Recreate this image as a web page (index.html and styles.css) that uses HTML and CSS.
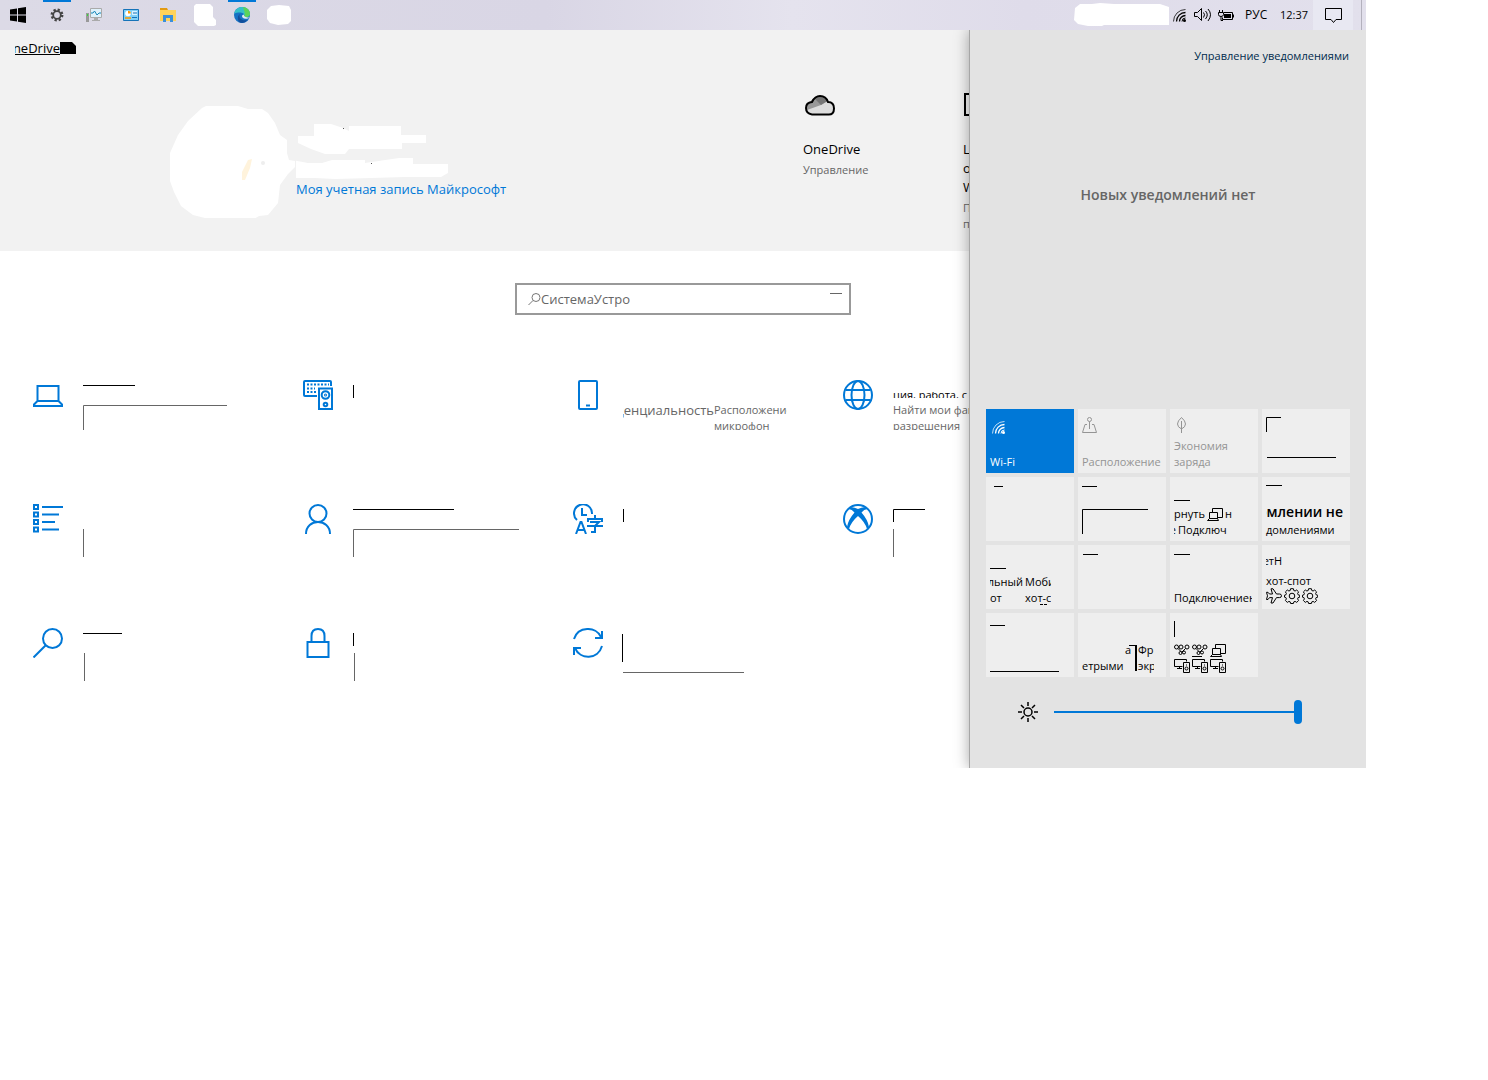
FILE: index.html
```html
<!DOCTYPE html>
<html lang="ru">
<head>
<meta charset="utf-8">
<title>Параметры</title>
<link rel="stylesheet" href="styles.css">
</head>
<body>
<svg class="defs" aria-hidden="true">
  <symbol id="wifi" viewBox="0 0 13 13"><g fill="none" stroke="currentColor"><path d="M.5 12.5A12 12 0 0 1 12.500 .5" opacity=".75"/><path d="M3.500 12.500A9 9 0 0 1 12.500 3.500M6.500 12.500A6 6 0 0 1 12.500 6.500" stroke-width="1.300"/><path d="M9 12.500Q9 9 12.500 9"/></g><circle cx="11.500" cy="11.500" r="1.500" fill="currentColor"/></symbol>
  <symbol id="gear" viewBox="0 0 16 16"><g fill="none" stroke="currentColor"><path d="M6.600 .7h2.800l.4 1.800 1.300.5 1.600-1 1.900 1.900-1 1.600.5 1.300 1.600.4v2l-1.600.4-.5 1.300 1 1.600-1.900 1.900-1.600-1-1.300.5-.4 1.600H6.600l-.4-1.600-1.300-.5-1.600 1-1.900-1.900 1-1.600-.5-1.300-1.400-.4v-2l1.400-.4.5-1.300-1-1.600 1.900-1.900 1.600 1 1.300-.5z"/><circle cx="8" cy="8" r="2.800"/></g></symbol>
  <symbol id="screens" viewBox="0 0 16 13"><path fill="none" stroke="currentColor" d="M5.500 4.500v-4h10v9h-5M2.500 4.500h8v6h-8zM.5 12.500l2-2h8l1 2z"/></symbol>
  <symbol id="project" viewBox="0 0 17 14"><path fill="none" stroke="currentColor" d="M8.500 7.500h-8v-7h12v2M3 9.500h5M5.500 7.500v2M9.500 3.500h6v10h-6zM12 6h1"/><circle cx="12.500" cy="9.500" r="1.500" fill="none" stroke="currentColor"/></symbol>
  <symbol id="snip" viewBox="0 0 16 12"><g fill="none" stroke="currentColor"><circle cx="2.500" cy="2.500" r="2"/><circle cx="7" cy="2.500" r="2"/><circle cx="13" cy="2.500" r="2"/><path d="M4 4l4 4M11.500 4 8 7.500"/><circle cx="6.500" cy="8.500" r="1.500"/><circle cx="10" cy="8" r="1.500"/></g></symbol>
  <symbol id="plane" viewBox="0 0 16 16"><path fill="none" stroke="currentColor" d="M5 .8h2L10.500 6h3q2 0 2 1.800t-2 1.800h-3L7 15H5l1.500-5.400H3.500L2 11.500H.5l1-3.700-1-3.500H2L3.500 6h3z"/></symbol>
</svg>

<div class="desktop">
  <header class="taskbar">
    <nav class="apps" aria-label="Панель задач">
      <button class="app start" aria-label="Пуск"><svg width="16" height="16"><path d="M0 2.500 7 1.500v6H0zM8 1.300 16 0v7.500H8zM0 8.500h7v6l-7-1zM8 8.500h8V16l-8-1.300z"/></svg></button>
      <button class="app open" aria-label="Параметры"><svg width="16" height="16" viewBox="0 0 16 16" fill="none" stroke="#444"><circle cx="8" cy="8" r="5.200" stroke-width="2.500" stroke-dasharray="2.200 1.884"/><circle cx="8" cy="8" r="3.800" stroke-width="1.800"/></svg></button>
      <button class="app" aria-label="Монитор"><svg width="16" height="16"><path d="M4.500 1.500h11v9h-11z" fill="#dff1fb" stroke="#aaa"/><path d="M5 6h2l1.500-2 2.500 4 2-2h2" fill="none" stroke="#1787b8"/><path d="M8 11h4v2h2v1H6v-1h2z" fill="#aaa"/><path d="M0 6h3v9H0z" fill="#999"/><path d="M1 7h1v2H1z" fill="#3d3"/></svg></button>
      <button class="app" aria-label="Панель управления"><svg width="16" height="16"><path d="M.5 2.500h15v11H.5z" fill="#7fd0f7" stroke="#1673b8"/><circle cx="5" cy="6.500" r="2.800" fill="#fff"/><path d="M5 6.500V3.700A2.800 2.800 0 0 1 7.800 6.500z" fill="#ff9800"/><path d="M9 4h5v4H9z" fill="#d9f2ff"/><path d="M2 11h6" stroke="#f90" stroke-width="1.500"/><path d="M10 6h4M9 10.500h5" stroke="#1673b8"/></svg></button>
      <button class="app" aria-label="Проводник"><svg width="16" height="16"><path d="M0 1h7l1 2H0z" fill="#e39b12"/><path d="M0 3h16v11H0z" fill="#ffd35a"/><path d="M3 15V8h10v7h-3v-4H6v4z" fill="#3b8fda"/></svg></button>
      <button class="app" aria-label="Приложение"><svg width="22" height="22"><path d="M2 0h14l3 3v10l3 3v5l-2 1H4l-4-4V2z" fill="#fff"/></svg></button>
      <button class="app open" aria-label="Edge"><svg width="16" height="16"><circle cx="8" cy="8" r="8" fill="#1672c4"/><path d="M.3 6.500C1 2.500 4.500 0 8 0c4.600 0 8 3 8 6.800 0 3-3.500 4.200-6 3 1-1.300 0-4.300-3.500-4.300C3.500 5.500 1 6 .3 6.500z" fill="#35c1c8"/><path d="M9 .1C13 .5 16 3.300 16 6.800c0 3-3.500 4.200-6 3 1.600-2.300.5-5-1-9.700z" fill="#5dd35a"/><path d="M6 7c-2 4 2 7.500 7.500 6-2 2.700-5 3.300-7 2.800C3 14 3 9 6 7z" fill="#124f9c"/><path d="M10 7.500q-3 .5-1.500 3 2 2 6 .7l1.500-1Q12 11 10 9z" fill="#dfe8f3"/></svg></button>
      <button class="app" aria-label="Приложение"><svg width="24" height="20"><path d="M4 1 12 0l10 1 2 4v11l-3 3-10 1-8-2-3-4V5z" fill="#fff"/></svg></button>
    </nav>
    <div class="tray">
      <svg class="blank" width="96" height="24"><path d="M1 5 6 1 18 1 26 0 40 1 86 1 95 4V22L30 22 28 23 14 23 4 21 0 17z" fill="#fff"/></svg>
      <svg width="13" height="13"><use href="#wifi"/></svg>
      <svg class="sound" width="17" height="14" fill="none" stroke="#000"><path d="M.5 4.500h3l4-4v12l-4-4h-3zM9.500 4.500q2 2 0 5M11.500 3q3.500 3.500 0 8M14 1q5 5.500 0 12"/></svg>
      <svg class="battery" width="16" height="13"><path d="M1.500 1v2M4.500 1v2M.5 3.500h5v2q0 2-2.500 2t-2.500-2zM3 7v4.500h2" fill="none" stroke="#000"/><path d="M6 3.500h8.500v7h-10V8.500" fill="none" stroke="#000"/><path d="M6 5h7v4H6zM15 5.500h1v3h-1z"/></svg>
      <span class="lang">РУС</span>
      <time class="clock">12:37</time>
      <button class="notify" aria-label="Уведомления"><svg width="17" height="17"><path d="M.5 1.500h16v11h-5.500L8.500 15.500 6 12.500H.5z" fill="none" stroke="#000"/></svg></button>
    </div>
  </header>

  <div class="workspace">
    <main class="settings">
      <section class="profile">
        <a class="crumb" href="#"><span class="crop-start">OneDrive</span><svg width="16" height="12"><path d="M0 0h12l4 4v8H0z"/></svg></a>
        <div class="account">
          <svg width="128" height="113" viewBox="168 105 128 113"><path d="M206 106h32l10 3h14l6 4 7 10 5 12 7 5v13l2 7 6 1v6l-7 7-8 11-2 18-10 12-9 1-10 6-10 4h-34v-8l-12-3-12-9-7-14-4-11v-28l8-18 10-14 14-13z" fill="#fff"/><path d="m248 160 4-1-2 9-5 12h-3v-8z" fill="#fff3dc"/><circle cx="263" cy="163" r="2" fill="#eee"/></svg>
          <div class="who">
            <svg width="152" height="59" viewBox="296 120 152 59"><path d="M298 136h16v-12h17l12 4 6 3v-5h52v9h25v8h-24v6h-53l-4 5h-20l-14-5-13-6zM292 160l16 3h14l10-3h33v3l34-5h14v6h35v9l-7 4h-36l-34 1-36 1-20-1h-23z" fill="#fff"/><path d="M343 128h1v1h-1zM371 163h1v1h-1z" fill="#555"/></svg>
            <a class="account-link" href="#">Моя учетная запись Майкрософт</a>
          </div>
        </div>
        <article class="service">
          <svg width="34" height="26"><path d="M9 21.500Q3 20.500 3 15.500 3 10 9 9 12 3 17 3q6 0 8 6 6 0 6 6.500t-6 6z" fill="#ddd"/><path d="M4 18Q1 12 8 9q4-5 10-5 5 1 7 5L18 13z" fill="#999"/><path d="M11 6q8-5 13 3l-6 4z" fill="#777"/><path d="M9 22.500Q3 21.500 3 16 3 10.500 9 10 12 4 17 4q6 0 8 6 6 0 6 6.500t-6 6z" fill="none" stroke="#000" stroke-width="2"/></svg>
          <h2>OneDrive</h2><p>Управление</p>
        </article>
        <article class="service">
          <svg width="34" height="26"><path d="M28 2H2v21h26z" fill="none" stroke="#000" stroke-width="2"/></svg>
          <h2>Центр<br>обновления<br>Windows</h2><p>Последняя<br>проверка</p>
        </article>
      </section>

      <div class="search">
        <svg width="13" height="14" fill="none" stroke="#777"><circle cx="8" cy="5.500" r="4"/><path d="M5 8.500.5 13"/></svg>
        <input type="text" aria-label="Найти параметр" value="СистемаУстро">
        <i class="dash"></i>
      </div>

      <div class="categories">
        <a class="category" href="#" aria-label="Система"><svg class="icon" viewBox="0 0 30 30"><path d="M4.500 6h21v15h-21zM4.500 21 1 24.500v1.500h28v-1.500L25.500 21"/></svg>
          <svg class="rules"><path d="M0 5.500h52"/><path class="soft" d="M.5 50V25.500h143.500"/></svg></a>
        <a class="category" href="#" aria-label="Устройства"><svg class="icon" viewBox="0 0 30 30"><path d="M14 16H2q-1 0-1-1V2q0-1 1-1h25q1 0 1 1v4"/><path d="M4 4.500h22M4 8.500h8M4 12h9" stroke-dasharray="2 1.500"/><path d="M16 8.500h13V29H16z"/><circle cx="22.500" cy="15" r="3.800"/><circle cx="22.500" cy="15" r=".5"/><circle cx="22.500" cy="24.500" r="1.800"/></svg>
          <svg class="rules"><path d="M.5 5v13"/></svg></a>
        <a class="category" href="#"><svg class="icon" viewBox="0 0 30 30"><rect x="6" y="1" width="18" height="28" rx="1"/><path d="M13 25.500h4"/></svg>
          <span class="cell split"><span class="crop-start wide">денциальность</span><span class="note">Расположение<br>микрофон</span></span></a>
        <a class="category" href="#"><svg class="icon" viewBox="0 0 30 30"><circle cx="15" cy="15" r="14"/><ellipse cx="15" cy="15" rx="6.500" ry="14"/><path d="M2.500 10h25M2.500 20h25"/></svg>
          <span class="cell"><span class="sliver">ция, работа, с</span><span class="note long">Найти мои файлы<br>разрешения</span></span></a>

        <a class="category" href="#" aria-label="Приложения"><svg class="icon" viewBox="0 0 30 30"><path d="M1 1h4v4H1zM1 8.500h4v4H1zM1 16h4v4H1zM1 23.500h4v4H1zM9 3h21M9 10.500h17M9 18h13M9 25.500h17"/></svg>
          <svg class="rules"><path class="soft" d="M.5 25v28"/></svg></a>
        <a class="category" href="#" aria-label="Учетные записи"><svg class="icon" viewBox="0 0 30 30"><circle cx="15" cy="9.500" r="8.500"/><path d="M3 30C3 14 27 14 27 30"/></svg>
          <svg class="rules"><path d="M0 5.500h101"/><path class="soft" d="M.5 53V25.500h165.500"/></svg></a>
        <a class="category" href="#" aria-label="Время и язык"><svg class="icon" viewBox="0 0 30 30"><path d="M4 16A9 9 0 1 1 19 10M9 4v7h5M3 30 7.500 18h1L13 30M4.500 26h7M22 11v3M15 18v-3h14v3M17 18h9l-4 4v6h-4M14 22h16"/></svg>
          <svg class="rules"><path d="M.5 5v13"/></svg></a>
        <a class="category" href="#" aria-label="Игры"><svg class="icon" viewBox="0 0 30 30"><circle cx="15" cy="15" r="14"/><path class="solid" d="M7 3.500Q10 2.500 15 5q5-2.500 8-1.500l2 2q-3-1-6.500 3Q25 16 26 23l-2 2q-2-7-9-13-7 6-9 13l-2-2q1-7 7.500-14.500-3.500-4-6.500-3z"/></svg>
          <svg class="rules"><path d="M.5 18V5.500h31.500"/><path class="soft" d="M.5 25v28"/></svg></a>

        <a class="category" href="#" aria-label="Поиск"><svg class="icon" viewBox="0 0 30 30"><circle cx="19.500" cy="10.500" r="9.500"/><path d="M13 17 .5 29.500"/></svg>
          <svg class="rules"><path d="M0 5.500h39"/><path class="soft" d="M1.500 25v28"/></svg></a>
        <a class="category" href="#" aria-label="Конфиденциальность"><svg class="icon" viewBox="0 0 30 30"><path d="M4.500 14h21v15h-21zM8.500 14V8q0-7 6.500-7t6.500 7v6"/></svg>
          <svg class="rules"><path d="M.5 5v13"/><path class="soft" d="M1.500 25v28"/></svg></a>
        <a class="category" href="#" aria-label="Обновление"><svg class="icon" viewBox="0 0 30 30"><path d="M1 11C5-2 23-2 28 9M29 3v7h-7M29 18C25 32 7 32 2 20M1 27v-7h7"/></svg>
          <svg class="rules"><path d="M-.5 6v28"/><path class="soft" d="M0 44.500h121"/></svg></a>
      </div>
    </main>

    <aside class="panel">
      <a class="manage" href="#">Управление уведомлениями</a>
      <p class="empty">Новых уведомлений нет</p>
      <div class="tiles">
        <button class="tile on"><svg width="15" height="13"><use href="#wifi" x="2" width="13" height="13"/></svg><span>Wi-Fi</span></button>
        <button class="tile off"><svg width="16" height="18" fill="none" stroke="currentColor"><circle cx="7.500" cy="2.500" r="2"/><path d="M7.500 4.500V12M5 7.500H3L.5 15.500h14L12 7.500h-2"/></svg><span>Расположение</span></button>
        <button class="tile off"><svg width="16" height="18" fill="none" stroke="currentColor"><path d="M7.500 16V4M7.500 .5q-4 3.500-4 6.500t4 5q4-2 4-5t-4-6.500z"/></svg><span>Экономия<br>заряда</span></button>
        <button class="tile" aria-label="Ночной свет"><svg class="marks"><path d="M4.500 23V8.500H19M5 48.500h69"/></svg></button>

        <button class="tile" aria-label="Bluetooth"><svg class="marks"><path d="M8 9.500h9"/></svg></button>
        <button class="tile" aria-label="Сеть"><svg class="marks"><path d="M4 9.500h15M4.500 57V32.500H70"/></svg></button>
        <button class="tile low"><svg class="marks"><path d="M4 23.500h16"/></svg>
          <span class="line">рнуть <svg width="16" height="13"><use href="#screens"/></svg>н</span><span class="line"><span class="crop-start tiny">е</span>Подключ</span></button>
        <button class="tile low"><svg class="marks"><path d="M4 8.500h16"/></svg>
          <span class="line strong"><span class="crop-start">омлении не</span></span><span class="line">домлениями</span></button>

        <button class="tile"><svg class="marks"><path d="M4 23.500h16M54 59.500h3M58 59.500h3"/></svg>
          <span class="pair"><span class="crop-start">льный</span><span>Моби</span><span>от</span><span>хот-с</span></span></button>
        <button class="tile" aria-label="Режим"><svg class="marks"><path d="M5 9.500h15"/></svg></button>
        <button class="tile"><svg class="marks"><path d="M4 9.500h16"/></svg><span class="crop-end">Подключениен</span></button>
        <button class="tile low"><span class="line first"><span class="crop-start small">ет</span>Н</span><span class="line">хот-спот</span>
          <span class="line glyphs raised"><svg width="16" height="16"><use href="#plane"/></svg><svg width="16" height="16"><use href="#gear"/></svg><svg width="16" height="16"><use href="#gear"/></svg></span></button>

        <button class="tile" aria-label="VPN"><svg class="marks"><path d="M4 12.500h15M4 58.500h69"/></svg></button>
        <button class="tile"><svg class="marks"><path d="M51 32.500h7"/><path d="M58 32v26" stroke-width="2"/></svg>
          <span class="pair late"><span class="end">а</span><span>Фр</span><span>етрыми</span><span>экр</span></span></button>
        <button class="tile low" aria-label="Проецирование"><svg class="marks"><path d="M4.500 8v16M22 43.500h10"/></svg>
          <span class="line glyphs"><svg width="16" height="13"><use href="#snip"/></svg><svg width="16" height="13"><use href="#snip"/></svg><svg width="16" height="13"><use href="#screens"/></svg></span>
          <span class="line glyphs tight"><svg width="17" height="14"><use href="#project"/></svg><svg width="17" height="14"><use href="#project"/></svg><svg width="17" height="14"><use href="#project"/></svg></span></button>
      </div>
      <label class="brightness">
        <svg width="20" height="20" viewBox="0 0 20 20" fill="none" stroke="#000" stroke-width="1.500"><circle cx="10" cy="10" r="4"/><path d="M10 0v4M10 16v4M0 10h4M16 10h4M3 3l3 3M14 14l3 3M17 3l-3 3M6 14l-3 3"/></svg>
        <input type="range" min="0" max="100" value="100" aria-label="Яркость">
      </label>
    </aside>
  </div>
</div>
</body>
</html>
```

FILE: styles.css
```css
* { box-sizing: border-box; }

body {
  margin: 0;
  background: #fff;
  color: #000;
  font: 13px/20px "Open Sans", "Noto Sans", sans-serif;
}

button {
  border: 0;
  padding: 0;
  background: none;
  color: inherit;
  font: inherit;
  text-align: left;
}

a { color: inherit; text-decoration: none; }
h2, p { margin: 0; font-weight: 400; }
svg { display: block; flex: none; }
.defs { display: none; }

.desktop { margin-right: 122px; }

/* Taskbar */
.taskbar {
  display: flex;
  justify-content: space-between;
  height: 30px;
  background: linear-gradient(90deg, #dcdae6, #d9d6e5 40%, #e5e3ee 58%, #dfdcea 75%, #e2e0ec);
  font-size: 11px;
}

.apps, .tray { display: flex; align-items: center; }

.app {
  display: flex;
  align-items: center;
  justify-content: center;
  width: 37px;
  height: 30px;
}

.start { width: 38px; padding-right: 2px; }

.open {
  background: linear-gradient(#0078d7, #0078d7) center top / 28px 2px no-repeat;
}

.tray { padding-right: 4px; }
.blank { margin-right: 3px; }
.sound { margin-left: 8px; }
.battery { margin-left: 7px; }
.lang { width: 35px; margin-left: 11px; font-size: 12px; }
.clock { width: 33px; }

.notify {
  display: flex;
  align-items: center;
  justify-content: center;
  width: 40px;
  height: 30px;
  margin-right: 8px;
  background: #e8e8f2;
}

.tray::after {
  content: "";
  width: 1px;
  height: 30px;
  background: #b3b1bd;
}

/* The notification panel shares the grid cell with the settings window */
.workspace { display: grid; overflow: hidden; }
.settings, .panel { grid-area: 1 / 1; min-width: 0; }

.profile {
  display: grid;
  grid-template-columns: 803px 160px 160px;
  grid-template-rows: 62px auto;
  height: 221px;
  background: #f2f2f2;
}

.crumb {
  display: flex;
  align-items: flex-start;
  grid-column: 1 / -1;
  padding: 8px 0 0 15px;
}

.crumb > svg { margin-top: 4px; }

.crop-start {
  display: flex;
  justify-content: flex-end;
  overflow: hidden;
  white-space: nowrap;
}

.crumb .crop-start { width: 45px; text-decoration: underline; }

.account { display: flex; padding: 13px 0 0 168px; }
.who { padding-top: 15px; }
.account-link { display: block; color: #0078d7; white-space: nowrap; }

.service h2 { margin-top: 22px; font-size: 13px; line-height: 19px; }
.service p { margin-top: 3px; color: #666; font-size: 11px; line-height: 16px; }

.search {
  display: flex;
  align-items: center;
  width: 336px;
  height: 32px;
  margin: 32px auto 0;
  padding: 0 7px 0 11px;
  border: 2px solid #999;
}

.search input {
  width: 92px;
  margin-right: auto;
  padding: 0;
  border: 0;
  outline: 0;
  background: none;
  color: #666;
  font: inherit;
}

.dash { width: 12px; height: 1px; margin-bottom: 12px; background: #666; }

.categories {
  display: grid;
  grid-template-columns: repeat(4, 270px);
  grid-auto-rows: 124px;
  padding: 65px 0 16px 33px;
}

.category { display: flex; gap: 20px; }

.icon {
  width: 30px;
  height: 30px;
  fill: none;
  stroke: #0078d7;
  stroke-width: 2;
}

.icon .solid { fill: #0078d7; stroke: none; }

.rules {
  width: 180px;
  height: 60px;
  overflow: visible;
  fill: none;
  stroke: #000;
}

.rules .soft { stroke: #666; }
.cell { height: 50px; padding-top: 12px; overflow: hidden; white-space: nowrap; color: #666; }
.split { display: flex; padding-top: 20px; }
.wide { width: 91px; }
.note { display: block; width: 73px; overflow: hidden; font-size: 11px; line-height: 16px; padding-top: 2px; }
.long { width: 120px; }
.sliver { display: block; height: 6px; margin-bottom: 2px; overflow: hidden; color: #000; font-size: 11px; line-height: 6px; }

/* Notification panel */
.panel {
  z-index: 1;
  display: flex;
  flex-direction: column;
  justify-self: end;
  width: 397px;
  padding: 16px 16px 44px;
  border-left: 1px solid #a6a6a6;
  background: #e3e3e3;
  box-shadow: 0 0 14px rgba(0, 0, 0, .35);
  font-size: 11px;
}

.manage { align-self: flex-end; margin-right: 1px; color: #002b4d; }
.empty { margin: 119px 0 204px; color: #666; font-size: 14px; font-weight: 600; text-align: center; }

.tiles {
  display: grid;
  grid-template-columns: repeat(4, 88px);
  grid-auto-rows: 64px;
  gap: 4px;
}

.tile {
  position: relative;
  display: flex;
  flex-direction: column;
  justify-content: space-between;
  padding: 8px 0 3px 4px;
  overflow: hidden;
  background: #eee;
  line-height: 16px;
  white-space: nowrap;
}

.on { padding-top: 12px; background: #0078d7; color: #fff; }
.off { color: #949494; }
.low { justify-content: flex-end; }

.marks {
  position: absolute;
  inset: 0;
  width: 88px;
  height: 64px;
  fill: none;
  stroke: #000;
}

.line { display: flex; gap: 2px; align-items: center; height: 16px; }
.strong { font-size: 14px; font-weight: 600; height: 20px; }
.strong .crop-start { width: 77px; line-height: 20px; }
.first { gap: 0; margin-bottom: 4px; }
.tiny { width: 2px; }
.small { width: 8px; }
.tight { gap: 1px; }
.glyphs.raised { margin-bottom: 3px; height: 14px; }

.pair {
  display: grid;
  grid-template-columns: 33px 26px;
  gap: 0 2px;
  width: 61px;
  margin-top: auto;
  overflow: hidden;
}

.late { grid-template-columns: 54px 16px; width: 72px; }
.end { padding-left: 43px; }
.crop-end { width: 78px; margin-top: auto; overflow: hidden; }

.brightness { display: flex; align-items: center; gap: 16px; margin: 23px 0 0 32px; }

.brightness input {
  width: 248px;
  height: 24px;
  margin: 0;
  appearance: none;
  background: linear-gradient(#0078d7, #0078d7) center / 100% 2px no-repeat;
}

.brightness input::-webkit-slider-thumb {
  appearance: none;
  width: 8px;
  height: 24px;
  border-radius: 4px;
  background: #0078d7;
}
```
